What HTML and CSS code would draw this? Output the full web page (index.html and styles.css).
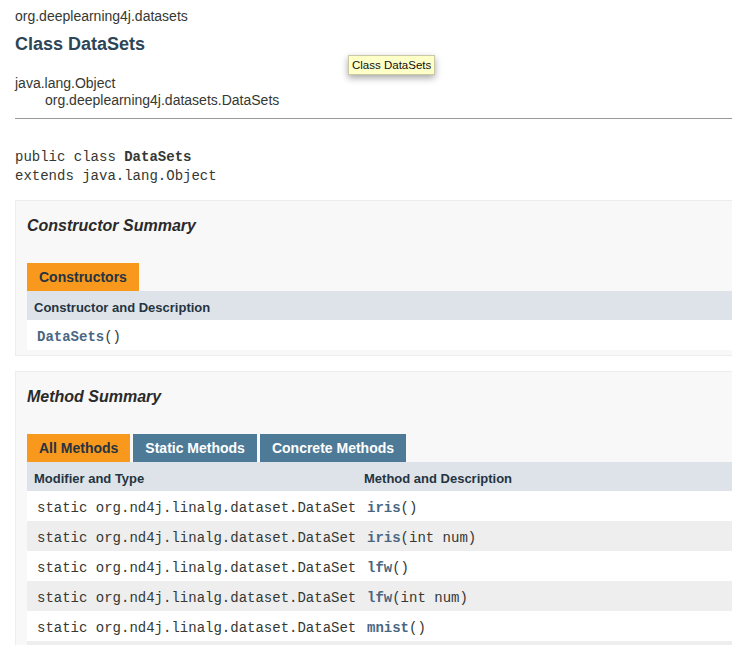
FILE: index.html
```html
<!DOCTYPE html>
<html lang="en">
<head>
<meta charset="utf-8">
<title>DataSets</title>
<link rel="stylesheet" href="styles.css">
</head>
<body>
<div class="page">
  <div class="header">
    <div class="subtitle">org.deeplearning4j.datasets</div>
    <h2 class="title">Class DataSets</h2>
    <div class="tooltip">Class DataSets</div>
  </div>
  <div class="inherit">
    <div>java.lang.Object</div>
    <div class="inherit-child">org.deeplearning4j.datasets.DataSets</div>
  </div>
  <hr class="rule">
  <pre class="decl">public class <b>DataSets</b>
extends java.lang.Object</pre>

  <section class="block">
    <h3 class="block-title">Constructor Summary</h3>
    <div class="tabs">
      <span class="tab active">Constructors</span>
    </div>
    <div class="table cons">
      <div class="th">Constructor and Description</div>
      <div class="td alt"><a class="link" href="#">DataSets</a>()</div>
    </div>
  </section>

  <section class="block">
    <h3 class="block-title">Method Summary</h3>
    <div class="tabs">
      <span class="tab active">All Methods</span>
      <span class="tab">Static Methods</span>
      <span class="tab">Concrete Methods</span>
    </div>
    <div class="table methods">
      <div class="th">Modifier and Type</div>
      <div class="th">Method and Description</div>

      <div class="td alt">static org.nd4j.linalg.dataset.DataSet</div>
      <div class="td alt"><a class="link" href="#">iris</a>()</div>

      <div class="td row">static org.nd4j.linalg.dataset.DataSet</div>
      <div class="td row"><a class="link" href="#">iris</a>(int&nbsp;num)</div>

      <div class="td alt">static org.nd4j.linalg.dataset.DataSet</div>
      <div class="td alt"><a class="link" href="#">lfw</a>()</div>

      <div class="td row">static org.nd4j.linalg.dataset.DataSet</div>
      <div class="td row"><a class="link" href="#">lfw</a>(int&nbsp;num)</div>

      <div class="td alt">static org.nd4j.linalg.dataset.DataSet</div>
      <div class="td alt"><a class="link" href="#">mnist</a>()</div>

      <div class="td row">static org.nd4j.linalg.dataset.DataSet</div>
      <div class="td row"><a class="link" href="#">mnist</a>(int&nbsp;num)</div>
    </div>
  </section>
</div>
</body>
</html>
```

FILE: styles.css
```css
html, body {
  margin: 0;
  padding: 0;
  overflow: hidden;
  background: #ffffff;
}

body {
  font-family: "Liberation Sans", Arial, Helvetica, sans-serif;
  font-size: 14px;
  color: #353833;
}

.page {
  width: 820px;
  padding-left: 15px;
}

.header {
  position: relative;
  padding-top: 7px;
}

.subtitle {
  line-height: 18px;
}

.title {
  margin: 8px 0 0;
  font-size: 18px;
  line-height: 22px;
  font-weight: bold;
  color: #2c4557;
}

.tooltip {
  position: absolute;
  left: 333px;
  top: 55px;
  padding: 0 3px 0 3px;
  height: 18px;
  line-height: 18px;
  font-size: 11.5px;
  color: #111;
  background: #ffffc8;
  border: 1px solid #c9c9a8;
  box-shadow: 0 3px 7px rgba(0, 0, 0, 0.35);
  white-space: nowrap;
}

.inherit {
  margin-top: 20px;
  line-height: 17px;
}

.inherit-child {
  padding-left: 30px;
}

.rule {
  margin: 9px 0 0;
  border: 0;
  border-top: 1px solid #999999;
  height: 0;
}

.decl {
  margin: 29px 0 0;
  font-family: "Liberation Mono", "Courier New", monospace;
  font-size: 14px;
  line-height: 19px;
  color: #353833;
}

.decl b {
  font-weight: bold;
}

.block {
  margin-top: 14px;
  border: 1px solid #ededed;
  background: #f8f8f8;
  padding: 0 20px 5px 11px;
}

.block + .block {
  margin-top: 15px;
}

.block-title {
  margin: 15px 0 0;
  font-size: 16px;
  line-height: 20px;
  font-style: italic;
  font-weight: bold;
  color: #2a2a2a;
}

.tabs {
  display: flex;
  gap: 3px;
  margin-top: 27px;
}

.tab {
  display: inline-block;
  height: 28px;
  line-height: 29px;
  padding: 0 12px 0 12px;
  font-weight: bold;
  font-size: 14px;
  color: #ffffff;
  background: #4d7a97;
  white-space: nowrap;
}

.tab.active {
  background: #f8981d;
  color: #253441;
}

.table {
  display: grid;
  grid-template-columns: 1fr;
}

.table.methods {
  grid-template-columns: 330px 1fr;
}

.th {
  background: #dee3e9;
  padding: 8px 3px 3px 7px;
  line-height: 18px;
  font-size: 13px;
  font-weight: bold;
  color: #253441;
}

.td {
  height: 19px;
  padding: 8px 3px 3px 10px;
  line-height: 19px;
  white-space: nowrap;
  font-family: "Liberation Mono", "Courier New", monospace;
  font-size: 14px;
  color: #353833;
}

.td.alt {
  background: #ffffff;
}

.td.row {
  background: #eeeeef;
}

.link {
  color: #4a6782;
  font-weight: bold;
  text-decoration: none;
}
```
